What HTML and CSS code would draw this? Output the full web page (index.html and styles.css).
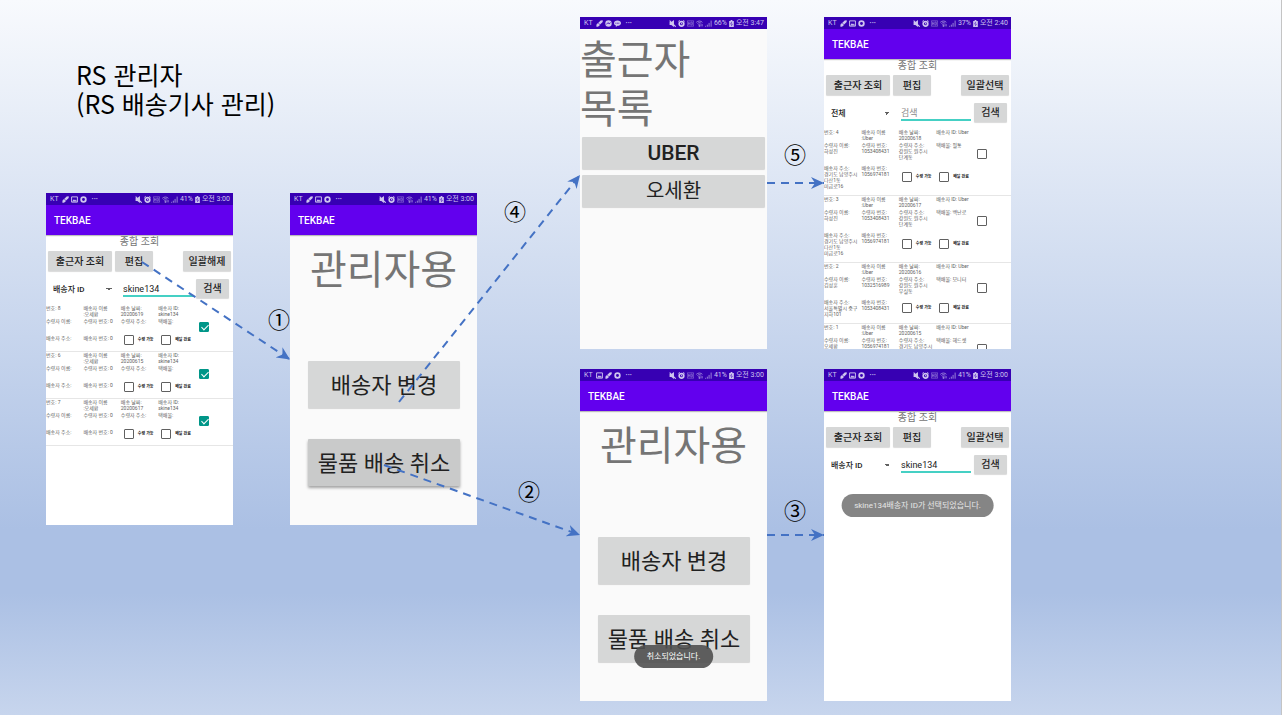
FILE: index.html
```html
<!DOCTYPE html>
<html lang="ko">
<head>
<meta charset="utf-8">
<title>RS 관리자</title>
<link rel="stylesheet" href="styles.css">
</head>
<body>
<svg class="sprite" aria-hidden="true">
  <symbol id="brush" viewBox="0 0 12 12"><path d="M11.5.5 8 1 4 4.500 7 7.500l4.500-4zM4 5.500 6.500 8C6 10.500 4 11.500.5 11.500 1.500 10.500 0 9 1 7.500 2 5.500 3 5.500 4 5.500z" fill="currentColor"/></symbol>
  <symbol id="image" viewBox="0 0 12 12"><path d="M1 1.500h10v9H1z" fill="none" stroke="currentColor" stroke-width="1.600"/><path d="M2 9.500 5 5.500l2 2L8.500 6 10 9.500z" fill="currentColor"/></symbol>
  <symbol id="ring" viewBox="0 0 12 12"><circle cx="6" cy="6" r="4" fill="none" stroke="currentColor" stroke-width="3"/></symbol>
  <symbol id="messenger" viewBox="0 0 12 12"><circle cx="6" cy="6" r="5.500" fill="currentColor"/><path d="M2.500 7.500 5 4.500l2 2 2.500-2" fill="none" stroke="#3700b3" stroke-width="1.500"/></symbol>
  <symbol id="talk" viewBox="0 0 12 12"><path d="M6 1c3.500 0 6 2 6 4.500S9.500 10 6 10l-3 2 .5-2.500C1.500 8.700 0 7.400 0 5.500 0 3 2.500 1 6 1z" fill="currentColor"/><path d="M2.500 5.500h7" stroke="#3700b3" stroke-width="1.500" stroke-dasharray="1.500 1"/></symbol>
  <symbol id="mute" viewBox="0 0 12 12"><path d="M1 3.500h3L8.500 0v12L4 8.500H1z" fill="currentColor"/><path d="m1 1 10.500 10.500" stroke="currentColor" stroke-width="2"/></symbol>
  <symbol id="alarm" viewBox="0 0 12 12"><circle cx="6" cy="6.500" r="4" fill="none" stroke="currentColor" stroke-width="2.800"/><path d="M.5 2.500 3 .5m8.500 2L9 .5M6 4.500v2.500h2" fill="none" stroke="currentColor" stroke-width="1.500"/></symbol>
  <symbol id="hd" viewBox="0 0 12 12"><path d="M.5 1.500h11v9H.5zM2.500 3.500v5m0-2.500h2.500m0-2.500v5m2-5v5h1.500l1-1V4.500l-1-1z" fill="none" stroke="currentColor"/></symbol>
  <symbol id="wifi" viewBox="0 0 12 12"><path d="M.5 4C3.500 1 8 1 11 4M2.500 6c2-2 4.500-2 6.500 0M4 8c1-1 2.500-1 3.500 0" fill="none" stroke="currentColor" stroke-width="1.500"/><path d="M5 9h2v2H5zM9 7v4m2-4v4" fill="currentColor" stroke="currentColor"/></symbol>
  <symbol id="signal" viewBox="0 0 12 12"><path d="M1 11.500V10m3 1.500V8m3 3.500V5m3.500 6.500V1" stroke="currentColor" stroke-width="1.600"/></symbol>
  <symbol id="battery" viewBox="0 0 8 12"><path d="M2.500 0h3v1.500H8V12H0V1.500h2.500z" fill="currentColor"/><path d="M4.500 3 2.500 7h3l-2 3.500" fill="none" stroke="#3700b3"/></symbol>
</svg>

<main class="slide">
  <h1 class="slide-title">RS 관리자<br>(RS 배송기사 관리)</h1>

  <section class="phone list-screen at-1">
    <header class="status"><span>KT</span><svg><use href="#brush"/></svg><svg><use href="#image"/></svg><svg><use href="#ring"/></svg><span class="dots">···</span><svg class="push"><use href="#mute"/></svg><svg><use href="#alarm"/></svg><svg class="dim"><use href="#hd"/></svg><svg class="dim"><use href="#wifi"/></svg><svg class="dim"><use href="#signal"/></svg><span>41%</span><svg class="battery"><use href="#battery"/></svg><span>오전 3:00</span></header>
    <div class="appbar">TEKBAE</div>
    <h2 class="caption">종합 조회</h2>
    <div class="actions"><button class="w-view">출근자 조회</button><button class="w-edit">편집</button><button class="w-all">일괄해제</button></div>
    <div class="search"><select aria-label="검색 조건"><option>배송자 ID</option></select><input type="text" aria-label="검색어" value="skine134"><button>검색</button></div>
    <div class="items">
      <article class="item">
        <span>번호: 8</span><span>배송자 이름<br>:오세환</span><span>배송 날짜:<br>20200619</span><span>배송자 ID:<br>skine134</span><span></span>
        <span>수령자 이름:</span><span>수령자 번호: 0</span><span>수령자 주소:</span><span>택배물:</span><input type="checkbox" aria-label="선택" checked>
        <span>배송자 주소:</span><span>배송자 번호: 0</span><label><input type="checkbox">수령 가능</label><label><input type="checkbox">배달 완료</label>
      </article>
      <article class="item">
        <span>번호: 6</span><span>배송자 이름<br>:오세환</span><span>배송 날짜:<br>20200615</span><span>배송자 ID:<br>skine134</span><span></span>
        <span>수령자 이름:</span><span>수령자 번호: 0</span><span>수령자 주소:</span><span>택배물:</span><input type="checkbox" aria-label="선택" checked>
        <span>배송자 주소:</span><span>배송자 번호: 0</span><label><input type="checkbox">수령 가능</label><label><input type="checkbox">배달 완료</label>
      </article>
      <article class="item">
        <span>번호: 7</span><span>배송자 이름<br>:오세환</span><span>배송 날짜:<br>20200617</span><span>배송자 ID:<br>skine134</span><span></span>
        <span>수령자 이름:</span><span>수령자 번호: 0</span><span>수령자 주소:</span><span>택배물:</span><input type="checkbox" aria-label="선택" checked>
        <span>배송자 주소:</span><span>배송자 번호: 0</span><label><input type="checkbox">수령 가능</label><label><input type="checkbox">배달 완료</label>
      </article>
    </div>
  </section>

  <section class="phone at-2">
    <header class="status"><span>KT</span><svg><use href="#brush"/></svg><svg><use href="#image"/></svg><svg><use href="#ring"/></svg><span class="dots">···</span><svg class="push"><use href="#mute"/></svg><svg><use href="#alarm"/></svg><svg class="dim"><use href="#hd"/></svg><svg class="dim"><use href="#wifi"/></svg><svg class="dim"><use href="#signal"/></svg><span>41%</span><svg class="battery"><use href="#battery"/></svg><span>오전 3:00</span></header>
    <div class="appbar">TEKBAE</div>
    <h2 class="hero">관리자용</h2>
    <div class="choices"><button>배송자 변경</button><button class="pressed">물품 배송 취소</button></div>
  </section>

  <section class="phone at-3">
    <header class="status"><span>KT</span><svg><use href="#brush"/></svg><svg><use href="#messenger"/></svg><svg><use href="#talk"/></svg><span class="dots">···</span><svg class="push"><use href="#mute"/></svg><svg><use href="#alarm"/></svg><svg class="dim"><use href="#hd"/></svg><svg class="dim"><use href="#wifi"/></svg><svg class="dim"><use href="#signal"/></svg><span>66%</span><svg class="battery"><use href="#battery"/></svg><span>오전 3:47</span></header>
    <h2 class="roster-title">출근자<br>목록</h2>
    <div class="roster"><button>UBER</button><button class="regular">오세환</button></div>
  </section>

  <section class="phone list-screen at-4">
    <header class="status"><span>KT</span><svg><use href="#brush"/></svg><svg><use href="#image"/></svg><svg><use href="#ring"/></svg><span class="dots">···</span><svg class="push"><use href="#mute"/></svg><svg><use href="#alarm"/></svg><svg class="dim"><use href="#hd"/></svg><svg class="dim"><use href="#wifi"/></svg><svg class="dim"><use href="#signal"/></svg><span>37%</span><svg class="battery"><use href="#battery"/></svg><span>오전 2:40</span></header>
    <div class="appbar">TEKBAE</div>
    <h2 class="caption">종합 조회</h2>
    <div class="actions"><button class="w-view">출근자 조회</button><button class="w-edit">편집</button><button class="w-all">일괄선택</button></div>
    <div class="search"><select aria-label="검색 조건"><option>전체</option></select><input type="text" aria-label="검색어" placeholder="검색"><button>검색</button></div>
    <div class="items">
      <article class="item">
        <span>번호: 4</span><span>배송자 이름<br>:Uber</span><span>배송 날짜:<br>20200618</span><span>배송자 ID: Uber</span><span></span>
        <span>수령자 이름:<br>하성진</span><span>수령자 번호:<br>1053408431</span><span>수령자 주소:<br>강원도 원주시<br>단계동</span><span>택배물: 필통</span><input type="checkbox" aria-label="선택">
        <span>배송자 주소:<br>경기도 남양주시<br>다산1동<br>미금로16</span><span>배송자 번호:<br>1056974181</span><label><input type="checkbox">수령 가능</label><label><input type="checkbox">배달 완료</label>
      </article>
      <article class="item">
        <span>번호: 3</span><span>배송자 이름<br>:Uber</span><span>배송 날짜:<br>20200617</span><span>배송자 ID: Uber</span><span></span>
        <span>수령자 이름:<br>하성진</span><span>수령자 번호:<br>1053408431</span><span>수령자 주소:<br>강원도 원주시<br>단계동</span><span>택배물: 백난로</span><input type="checkbox" aria-label="선택">
        <span>배송자 주소:<br>경기도 남양주시<br>다산1동<br>미금로16</span><span>배송자 번호:<br>1056974181</span><label><input type="checkbox">수령 가능</label><label><input type="checkbox">배달 완료</label>
      </article>
      <article class="item">
        <span>번호: 2</span><span>배송자 이름<br>:Uber</span><span>배송 날짜:<br>20200616</span><span>배송자 ID: Uber</span><span></span>
        <span>수령자 이름:<br>김성훈</span><span>수령자 번호:<br>1032516989</span><span>수령자 주소:<br>강원도 원주시<br>무실동</span><span>택배물: 모니터</span><input type="checkbox" aria-label="선택">
        <span>배송자 주소:<br>서울특별시 중구<br>지하101</span><span>배송자 번호:<br>1053408431</span><label><input type="checkbox">수령 가능</label><label><input type="checkbox">배달 완료</label>
      </article>
      <article class="item">
        <span>번호: 1</span><span>배송자 이름<br>:Uber</span><span>배송 날짜:<br>20200615</span><span>배송자 ID: Uber</span><span></span>
        <span>수령자 이름:<br>오세환</span><span>수령자 번호:<br>1056974181</span><span>수령자 주소:<br>경기도 남양주시<br>다산1동</span><span>택배물: 헤드셋</span><input type="checkbox" aria-label="선택">
      </article>
    </div>
  </section>

  <section class="phone at-5">
    <header class="status"><span>KT</span><svg><use href="#image"/></svg><svg><use href="#brush"/></svg><svg><use href="#ring"/></svg><span class="dots">···</span><svg class="push"><use href="#mute"/></svg><svg><use href="#alarm"/></svg><svg class="dim"><use href="#hd"/></svg><svg class="dim"><use href="#wifi"/></svg><svg class="dim"><use href="#signal"/></svg><span>41%</span><svg class="battery"><use href="#battery"/></svg><span>오전 3:00</span></header>
    <div class="appbar">TEKBAE</div>
    <h2 class="hero">관리자용</h2>
    <div class="choices"><button>배송자 변경</button><button>물품 배송 취소</button></div>
    <div class="toast toast-low">취소되었습니다.</div>
  </section>

  <section class="phone list-screen at-6">
    <header class="status"><span>KT</span><svg><use href="#brush"/></svg><svg><use href="#image"/></svg><svg><use href="#ring"/></svg><span class="dots">···</span><svg class="push"><use href="#mute"/></svg><svg><use href="#alarm"/></svg><svg class="dim"><use href="#hd"/></svg><svg class="dim"><use href="#wifi"/></svg><svg class="dim"><use href="#signal"/></svg><span>41%</span><svg class="battery"><use href="#battery"/></svg><span>오전 3:00</span></header>
    <div class="appbar">TEKBAE</div>
    <h2 class="caption">종합 조회</h2>
    <div class="actions"><button class="w-view">출근자 조회</button><button class="w-edit">편집</button><button class="w-all">일괄선택</button></div>
    <div class="search"><select aria-label="검색 조건"><option>배송자 ID</option></select><input type="text" aria-label="검색어" value="skine134"><button>검색</button></div>
    <div class="toast toast-mid">skine134배송자 ID가 선택되었습니다.</div>
  </section>

  <svg class="arrows" width="1283" height="715" aria-hidden="true">
    <defs><marker id="head" markerUnits="userSpaceOnUse" markerWidth="14" markerHeight="12" refX="13" refY="6" orient="auto"><path d="M0 0 13 6 0 12 4 6z" fill="#4472c4"/></marker></defs>
    <g class="flow">
      <path d="M142 262 290 359.500" marker-end="url(#head)"/>
      <path d="M384 465 580 535" marker-end="url(#head)"/>
      <path d="M767 535H824" marker-end="url(#head)"/>
      <path d="M399 402 580 175" marker-end="url(#head)"/>
      <path d="M767 183H824" marker-end="url(#head)"/>
    </g>
  </svg>
  <span class="step step-1">①</span>
  <span class="step step-2">②</span>
  <span class="step step-3">③</span>
  <span class="step step-4">④</span>
  <span class="step step-5">⑤</span>
</main>
</body>
</html>
```
FILE: styles.css
```css
* { box-sizing: border-box; }

body {
  margin: 0;
  font-family: Roboto, "Noto Sans CJK KR", sans-serif;
  color: #212121;
  background: #fff;
}

h1, h2 { margin: 0; font-weight: 400; }

button, input, select { font: inherit; color: inherit; margin: 0; }

button {
  padding: 0;
  border: 0;
  border-radius: 1px;
  background: #d6d7d7;
  box-shadow: 0 1px 1px rgba(0, 0, 0, .15);
  font-weight: 500;
  white-space: nowrap;
}

.sprite { position: absolute; width: 0; height: 0; }

.slide {
  position: relative;
  min-height: 100vh;
  margin-right: 1px;
  border-right: 1px solid #c4c4c4;
  overflow: hidden;
  background: linear-gradient(#f8fafd 0%, #abc0e4 74%, #abc0e4 83%, #c7d5ed 100%);
}

.slide-title {
  position: absolute;
  left: 76px;
  top: 60px;
  font: 400 25px/29px "Noto Sans CJK KR", sans-serif;
  color: #000;
}

/* Phones placed on the slide */
.phone {
  position: absolute;
  width: 187px;
  height: 332px;
  overflow: hidden;
  background: #fafafa;
}
.list-screen { background: #fff; }
.at-1 { left: 46px; top: 193px; }
.at-2 { left: 290px; top: 193px; }
.at-3 { left: 580px; top: 17px; }
.at-4 { left: 824px; top: 17px; }
.at-5 { left: 580px; top: 369px; }
.at-6 { left: 824px; top: 369px; }

.status {
  display: flex;
  align-items: center;
  gap: 2px;
  height: 12px;
  padding: 0 3px 0 4px;
  background: #3700b3;
  color: #cfc5ef;
  font-size: 7px;
  line-height: 13px;
  white-space: nowrap;
}
.status svg { flex: none; width: 7px; height: 7px; }
.status span:first-child { margin-right: 1px; }
.status .dots { margin-left: 3px; font-weight: 700; }
.status .push { margin-left: auto; }
.status .dim { opacity: .7; }
.status .battery { width: 5px; }

.appbar {
  height: 30px;
  padding-left: 8px;
  background: #6200ee;
  color: #fff;
  font-size: 10px;
  font-weight: 500;
  line-height: 31px;
  box-shadow: 0 1px 1px rgba(0, 0, 0, .25);
}

.caption {
  height: 16px;
  font-size: 10px;
  line-height: 14px;
  text-align: center;
  color: #757575;
}

.actions {
  display: flex;
  gap: 3px;
  padding: 0 2px;
}
.actions button { height: 20px; font-size: 10px; line-height: 21px; }
.w-view { width: 64px; }
.w-edit { width: 38px; }
.w-all { width: 48px; margin-left: auto; }

.search {
  display: flex;
  align-items: flex-start;
  gap: 3px;
  padding: 8px 4px 0 7px;
}
.search select {
  width: 67px;
  height: 21px;
  padding: 0;
  border: 0;
  appearance: none;
  background: linear-gradient(to bottom right, #616161 50%, transparent 50%) 56px 9px / 3px 3px no-repeat,
    linear-gradient(to bottom left, #616161 50%, transparent 50%) 53px 9px / 3px 3px no-repeat;
  font-size: 8px;
  font-weight: 500;
}
.search input {
  flex: 1;
  width: 70px;
  height: 18px;
  padding: 3px 0 0;
  border: 0;
  border-bottom: 2px solid #45d0c4;
  background: none;
  font-size: 9px;
}
.search input::placeholder { color: #8a8a8a; opacity: 1; }
.search button { width: 33px; height: 19px; font-size: 10px; line-height: 20px; }

.items { padding-top: 5px; }
.item {
  display: grid;
  grid-template-columns: repeat(5, 1fr);
  grid-template-rows: 13px auto auto;
  border-bottom: 1px solid #e6e6e6;
  color: #606060;
  font-size: 5px;
  line-height: 6px;
  white-space: nowrap;
}
.item > * { min-width: 0; }
.item > :nth-child(n+6) { padding-bottom: 5px; min-height: 17px; }
.item > :nth-child(n+11) { min-height: 16px; padding-bottom: 6px; }
.item > label { display: flex; align-items: center; gap: 4px; padding: 0 0 0 3px; font-size: 4px; font-weight: 700; color: #222; }

.item input {
  flex: none;
  width: 10px;
  height: 10px;
  appearance: none;
  border: 1px solid #606060;
  border-radius: 1px;
}
.item > input:nth-child(10) {
  align-self: center;
  min-height: 0;
  margin-left: 3px;
  padding: 0;
}
.item input:checked {
  border-color: #009688;
  background: #009688;
  position: relative;
}
.item input:checked::after {
  content: "";
  position: absolute;
  left: 3px;
  top: 0;
  width: 3px;
  height: 6px;
  border: solid #fff;
  border-width: 0 1px 1px 0;
  transform: rotate(45deg);
}

.hero {
  padding-top: 11px;
  font-size: 40px;
  line-height: 50px;
  text-align: center;
  color: #757575;
}
.choices {
  display: flex;
  flex-direction: column;
  gap: 31px;
  padding: 65px 17px 0 18px;
}
.choices button { height: 47px; font-size: 22px; line-height: 49px; font-weight: 400; }
.choices .pressed { background: #c9caca; box-shadow: 0 2px 3px rgba(0, 0, 0, .35); }

.roster-title {
  padding: 7px 0 3px;
  font-size: 40px;
  line-height: 49px;
  color: #757575;
}
.roster {
  display: flex;
  flex-direction: column;
  gap: 6px;
  padding: 0 2px;
}
.roster button { height: 32px; font-size: 21px; line-height: 33px; }
.roster .regular { font-size: 20px; font-weight: 400; }

.toast {
  position: absolute;
  left: 50%;
  transform: translateX(-50%);
  padding: 0 13px;
  border-radius: 12px;
  font-size: 8px;
  line-height: 23px;
  white-space: nowrap;
}
.toast-low { top: 276px; background: rgba(80, 80, 80, .9); color: #fff; }
.toast-mid { top: 125px; background: #858585; color: #e6e6e6; }

.arrows { position: absolute; left: 0; top: 0; pointer-events: none; }
.flow { fill: none; stroke: #4472c4; stroke-width: 2px; stroke-dasharray: 8 6; }

.step {
  position: absolute;
  font: 400 22px/24px "Noto Sans CJK KR", sans-serif;
  color: #000;
}
.step-1 { left: 268px; top: 306px; }
.step-2 { left: 518px; top: 478px; }
.step-3 { left: 784px; top: 497px; }
.step-4 { left: 504px; top: 198px; }
.step-5 { left: 784px; top: 141px; }
```
